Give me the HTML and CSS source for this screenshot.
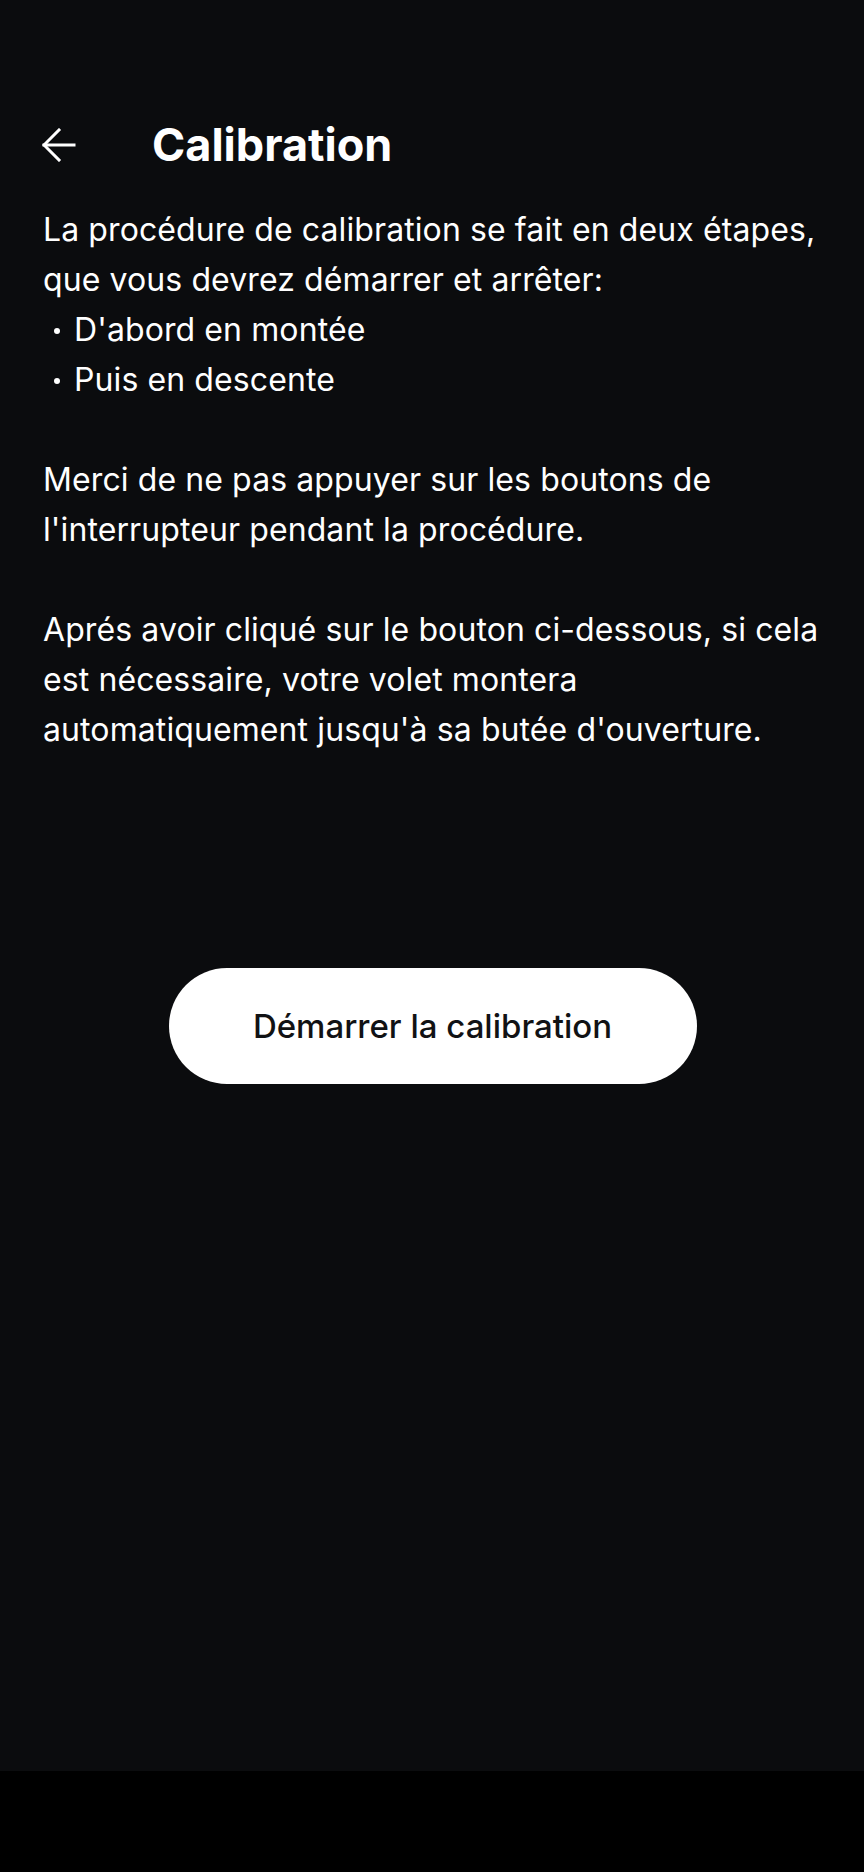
FILE: index.html
```html
<!DOCTYPE html>
<html lang="fr">
<head>
  <meta charset="UTF-8" />
  <meta name="viewport" content="width=device-width, initial-scale=1.0"/>
  <title>Calibration</title>
  <link rel="stylesheet" href="styles.css">
</head>
<body>

  <div class="screen">
    <header class="top-bar">
      <button class="back-btn" aria-label="Retour">
        <svg width="34" height="34" viewBox="0 0 34 34" fill="none" stroke="white" stroke-width="3" stroke-linecap="square">
          <path d="M2 17H32" />
          <path d="M17 2L2 17L17 32" />
        </svg>
      </button>
      <h1>Calibration</h1>
    </header>

    <div class="content">
      <p>La procédure de calibration se fait en deux étapes,<br>que vous devrez démarrer et arrêter:</p>
      <ul class="steps">
        <li>D'abord en montée</li>
        <li>Puis en descente</li>
      </ul>

      <p class="spaced">Merci de ne pas appuyer sur les boutons de<br>l'interrupteur pendant la procédure.</p>

      <p class="spaced">Aprés avoir cliqué sur le bouton ci-dessous, si cela est nécessaire, votre volet montera automatiquement jusqu'à sa butée d'ouverture.</p>
    </div>

    <div class="actions">
      <button class="start-btn" id="startBtn">Démarrer la calibration</button>
    </div>
  </div>

  <div class="nav-bar"></div>

</body>
</html>
```

FILE: styles.css
```css
body {
  margin: 0;
  background: #000;
  font-family: 'Inter', 'Noto Sans', sans-serif;
  color: white;
}

.screen {
  height: 1771px;
  background: #0b0c0e;
  box-sizing: border-box;
  padding: 116px 0 0;
}

.top-bar {
  display: flex;
  align-items: center;
  height: 58px;
  padding-left: 42px;
}

.back-btn {
  background: none;
  border: none;
  padding: 0;
  width: 34px;
  height: 34px;
  cursor: pointer;
}

.back-btn svg {
  display: block;
}

h1 {
  margin: 0 0 0 76px;
  font-size: 45px;
  font-weight: 700;
  line-height: 58px;
}

.content {
  padding: 31px 40px 0 43px;
  font-size: 32px;
  line-height: 50px;
  letter-spacing: 0.1px;
}

.content p {
  margin: 0;
}

.content p.spaced {
  margin-top: 50px;
}

.steps {
  list-style: none;
  margin: 0;
  padding: 0 0 0 31px;
}

.steps li {
  position: relative;
}

.steps li::before {
  content: "";
  position: absolute;
  left: -20px;
  top: 23px;
  width: 6px;
  height: 6px;
  border-radius: 50%;
  background: white;
}

.actions {
  display: flex;
  justify-content: center;
  margin-top: 213px;
}

.start-btn {
  width: 528px;
  height: 116px;
  margin-left: 1px;
  border: none;
  border-radius: 58px;
  background: white;
  color: #111214;
  font-family: 'Inter', 'Noto Sans', sans-serif;
  font-size: 33px;
  font-weight: 500;
  cursor: pointer;
}

.nav-bar {
  height: 101px;
  background: #000;
}
```
